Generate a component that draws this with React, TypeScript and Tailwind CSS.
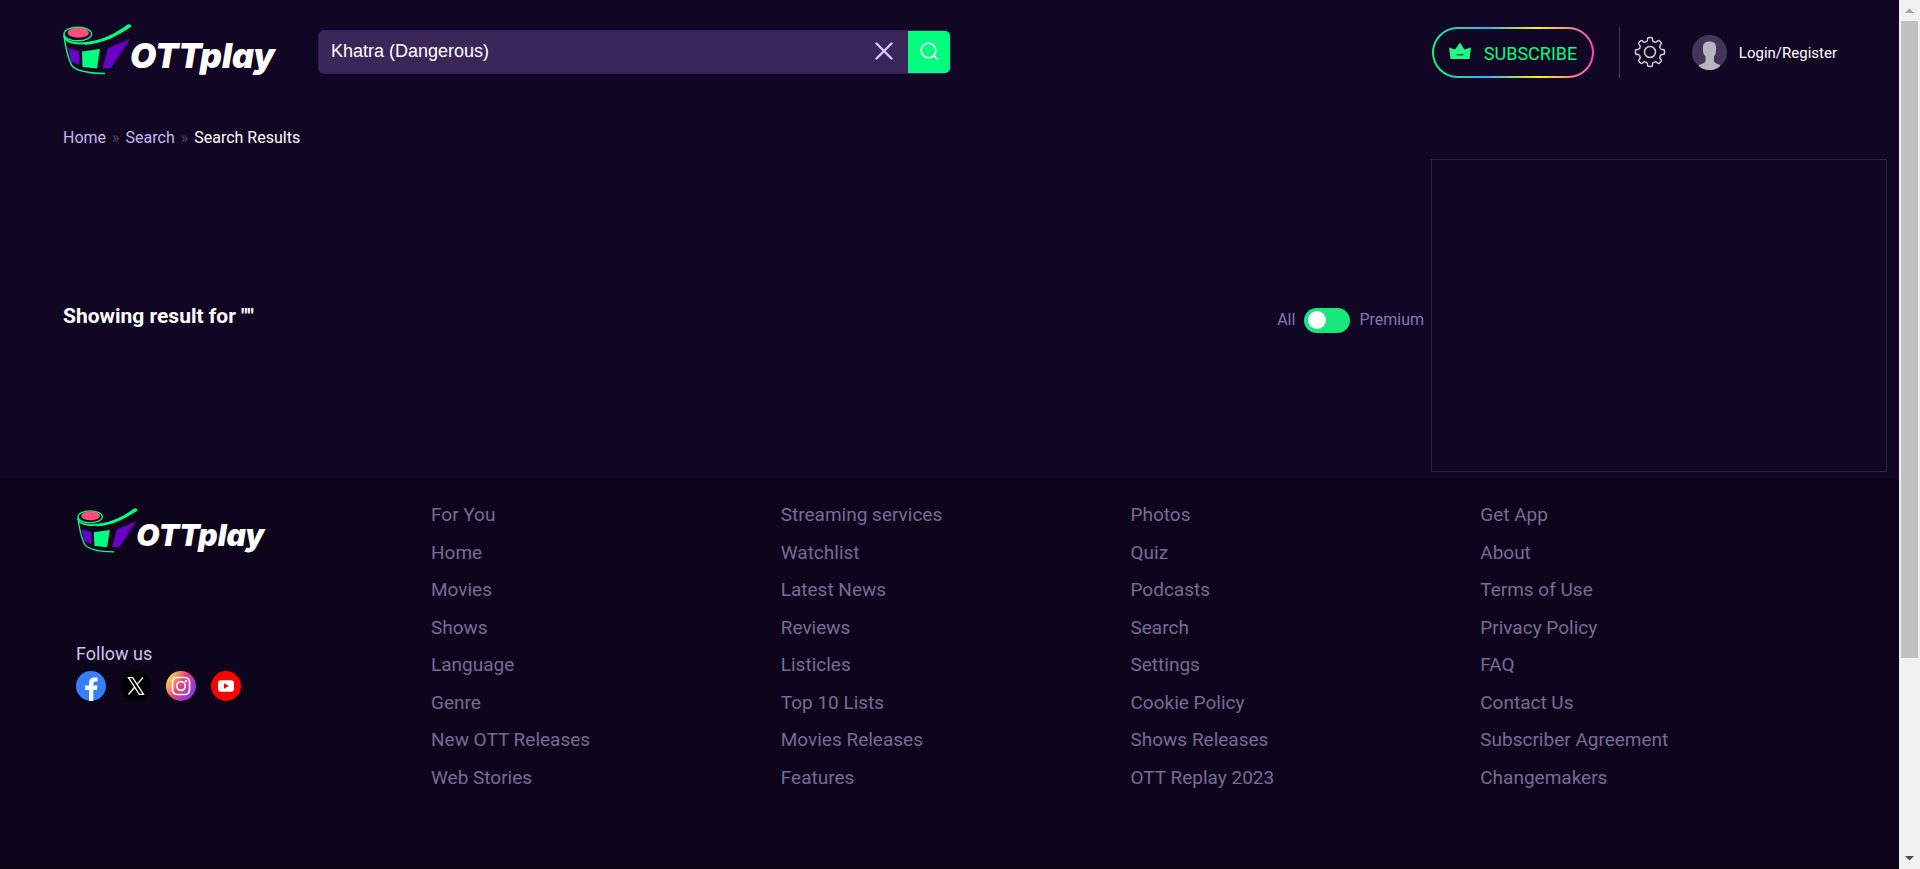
import React from "react";

const columns: string[][] = [
  ["For You", "Home", "Movies", "Shows", "Language", "Genre", "New OTT Releases", "Web Stories"],
  ["Streaming services", "Watchlist", "Latest News", "Reviews", "Listicles", "Top 10 Lists", "Movies Releases", "Features"],
  ["Photos", "Quiz", "Podcasts", "Search", "Settings", "Cookie Policy", "Shows Releases", "OTT Replay 2023"],
  ["Get App", "About", "Terms of Use", "Privacy Policy", "FAQ", "Contact Us", "Subscriber Agreement", "Changemakers"],
];

function Logo({ className }: { className: string }) {
  return (
    <svg viewBox="0 0 218 52" className={className} role="img" aria-label="OTTplay">
      <path d="M1 11C2 20 5 33 8 40C10 46 24 49.500 42 49.500" fill="none" stroke="#00ff7f" strokeWidth="1.500" />
      <path d="M5 24L16 27L16.500 41L8 37.500Z" fill="#6a00c4" />
      <path d="M19 27.500L37 25L34 44.500L19.500 43Z" fill="#00ff7f" />
      <path d="M45 24L67 15L48 44L39.500 44.500Z" fill="#6a00c4" />
      <ellipse cx="14.800" cy="10" rx="13.800" ry="6.800" fill="#110624" stroke="#00ff7f" strokeWidth="1.400" />
      <ellipse cx="15.300" cy="8.800" rx="10.700" ry="5" fill="#ff4d7d" />
      <path d="M1 12C3 21 22 21 38 16C50 12 58 7 66 1.500" fill="none" stroke="#00ff7f" strokeWidth="2" />
      <path d="M22 18.500C40 16.500 53 9 64.500 0.500Q68.500-.5 68 3C54 12 42 19 22 21Z" fill="#00ff7f" />
      <text x="67" y="43.500" fill="#fff" fontFamily="Inter, sans-serif" fontWeight="900" fontStyle="italic" fontSize="34">OTTplay</text>
    </svg>
  );
}

function Gear() {
  const teeth = [0, 45, 90, 135, 180, 225, 270, 315];
  return (
    <svg viewBox="-16 -16 32 32" className="size-8" fill="none" stroke="#d5d1da" strokeWidth="1.500" strokeLinejoin="round">
      {teeth.map((angle) => (
        <path
          key={angle}
          transform={`rotate(${angle})`}
          d="M-3.500-10.500Q-2.500-11-2.500-12V-13Q-2.500-14.500-1-14.500H1Q2.500-14.500 2.500-13V-12Q2.500-11 3.500-10.500Q4.300-10 4.950-9.900"
        />
      ))}
      <circle r="5.500" />
    </svg>
  );
}

function Facebook() {
  return (
    <svg viewBox="0 0 30 30" className="size-[30px]">
      <circle cx="15" cy="15" r="15" fill="#3580ff" />
      <path d="M13 30V19H9V14.500H13V12Q13 6.500 18.500 6.500H21.500V10.500H19.500Q17.300 10.500 17.300 12.700V14.500H21.500L20.800 19H17.300V30Z" fill="#fff" />
    </svg>
  );
}

function XLogo() {
  return (
    <svg viewBox="0 0 30 30" className="size-[30px]">
      <circle cx="15" cy="15" r="15" fill="#000" />
      <g fill="none" stroke="#fff" strokeWidth="1.300">
        <path d="M7.500 6.700H11.700L22.500 23.300H18.300Z" />
        <path d="M22 6.500L16 13.400M13.800 16L7.500 23.500" />
      </g>
    </svg>
  );
}

function Instagram() {
  return (
    <svg viewBox="0 0 30 30" className="size-[30px]">
      <defs>
        <linearGradient id="insta" x1="0" y1=".2" x2="1" y2=".8">
          <stop offset=".1" stopColor="#ffc85a" />
          <stop offset=".45" stopColor="#f0407b" />
          <stop offset=".75" stopColor="#a93bc4" />
          <stop offset="1" stopColor="#5d45df" />
        </linearGradient>
      </defs>
      <circle cx="15" cy="15" r="15" fill="url(#insta)" />
      <g fill="none" stroke="#fff" strokeWidth="1.700">
        <rect x="6.500" y="6.500" width="17" height="17" rx="4.500" />
        <circle cx="15" cy="15" r="4.300" />
      </g>
      <circle cx="20" cy="10" r="1.200" fill="#fff" />
    </svg>
  );
}

function YouTube() {
  return (
    <svg viewBox="0 0 30 30" className="size-[30px]">
      <circle cx="15" cy="15" r="15" fill="#f00" />
      <rect x="7" y="9.300" width="16" height="11.500" rx="3" fill="#fff" />
      <path d="M13 12.300L17.800 15L13 17.800Z" fill="#f00" />
    </svg>
  );
}

const socials = [
  { name: "Facebook", Icon: Facebook },
  { name: "X", Icon: XLogo },
  { name: "Instagram", Icon: Instagram },
  { name: "YouTube", Icon: YouTube },
];

function Header() {
  return (
    <header className="flex h-[106px] items-start pl-[63px] pr-[62px]">
      <a href="#home" className="mt-6">
        <Logo className="h-[52px] w-[218px] overflow-visible" />
      </a>
      <form className="ml-[37px] mt-[30px] flex h-11 w-[633px] overflow-hidden rounded-md border border-[#3b1566] bg-[#3b265a]" onSubmit={(e) => e.preventDefault()}>
        <input
          aria-label="Search"
          defaultValue="Khatra (Dangerous)"
          className="min-w-0 flex-1 bg-transparent px-3 pb-[2px] font-['Liberation_Sans',sans-serif] text-[18px] text-white outline-none"
        />
        <button type="button" aria-label="Clear search" className="flex w-12 items-center justify-center pb-[2px]">
          <svg viewBox="0 0 18 18" className="size-[18px]" stroke="#d9c8f5" strokeWidth="2.400" strokeLinecap="round">
            <path d="M1.500 1.500L16.500 16.500M16.500 1.500L1.500 16.500" />
          </svg>
        </button>
        <button type="submit" aria-label="Submit search" className="flex w-[42px] items-center justify-center bg-[#00ff7f] pb-[2px]">
          <svg viewBox="0 0 18 18" className="size-[18px]" fill="none" stroke="#fff" strokeWidth="1.600" strokeLinecap="round">
            <circle cx="8.500" cy="8.500" r="7.300" />
            <path d="M13.800 13.800L17 17" />
          </svg>
        </button>
      </form>
      <div className="ml-auto mt-[27px] flex h-[51px] items-center">
        <button className="h-[51px] w-[162px] rounded-full bg-[linear-gradient(90deg,#1ef07f_0%,#29b6f6_33%,#f5f518_66%,#ff3fd0_100%)] p-[2px]">
          <span className="flex h-full items-center gap-[13px] rounded-full bg-[#110624] pl-[15px] pt-[2px] text-[18px] text-[#00ff7f]">
            <svg viewBox="0 0 22 18" className="mb-[6px] h-[18px] w-[22px]">
              <path d="M0 5.500L6 7.500L11 .5L15.500 7.500L22 5.500L20.500 17H1.500Z" fill="#22f586" />
              <path d="M7.500 12.700H14.500" stroke="#0b6b3a" strokeWidth="1.500" />
            </svg>
            SUBSCRIBE
          </span>
        </button>
        <div className="ml-[25px] h-full w-px bg-[#43345a]" />
        <button aria-label="Settings" className="ml-[14px] pb-[2px]">
          <Gear />
        </button>
        <a href="#login" className="ml-[26px] flex items-center gap-[12px] text-[15px] text-white">
          <svg viewBox="0 0 35 35" className="size-[35px]">
            <defs>
              <clipPath id="avatar">
                <circle cx="17.500" cy="17.500" r="17.500" />
              </clipPath>
            </defs>
            <g clipPath="url(#avatar)">
              <rect width="35" height="35" fill="#433459" />
              <path d="M11 12Q11 6.500 17.500 6.500T24 12V16Q24 19.500 22 21.500V26Q22 28 28 30V35H7V30Q13.500 28 13.500 26V21.500Q11 19.500 11 16Z" fill="#b9b5bf" />
            </g>
          </svg>
          <span className="pt-[2px]">Login/Register</span>
        </a>
      </div>
    </header>
  );
}

function Results() {
  return (
    <main>
      <nav aria-label="Breadcrumb" className="flex h-[53px] items-end gap-[6px] pb-[9px] pl-[63px] text-[16px] leading-6">
        <a href="#home" className="text-[#c9b6f0]">Home</a>
        <span className="text-[#5b4a75]">»</span>
        <a href="#search" className="text-[#c9b6f0]">Search</a>
        <span className="text-[#5b4a75]">»</span>
        <span className="text-white">Search Results</span>
      </nav>
      <div className="flex pb-[6px] pl-[63px] pr-3">
        <div className="flex flex-1 items-start justify-between pr-[7px] pt-[143px]">
          <h1 className="text-[21px] font-bold leading-7 text-white">Showing result for ""</h1>
          <div className="mt-1 flex items-center gap-[9px] text-[16px] leading-7 text-[#8b75b5]">
            <span>All</span>
            <label className="flex">
              <input type="checkbox" role="switch" aria-label="Premium only" className="peer sr-only" />
              <span className="flex h-[25px] w-[46px] items-center rounded-full bg-[#16e87c] px-1 peer-checked:justify-end">
                <span className="size-[18px] rounded-full bg-white" />
              </span>
            </label>
            <span>Premium</span>
          </div>
        </div>
        <aside className="h-[313px] w-[456px] border border-[#30253f]" />
      </div>
    </main>
  );
}

function Footer() {
  return (
    <footer className="flex flex-1 flex-col bg-[#0d051b]">
      <div className="flex flex-1 pl-[76px] pr-[69px]">
        <div className="w-[355px] pt-[30px]">
          <a href="#home" className="block w-[195px]">
            <Logo className="h-[46px] w-[195px] overflow-visible" />
          </a>
          <p className="mt-[86px] text-[18px] leading-7 text-[#d3c3f2]">Follow us</p>
          <ul className="mt-[3px] flex gap-[15px]">
            {socials.map(({ name, Icon }) => (
              <li key={name}>
                <a href={`#${name}`} aria-label={name}>
                  <Icon />
                </a>
              </li>
            ))}
          </ul>
        </div>
        <div className="grid flex-1 grid-cols-4 pt-[23px]">
          {columns.map((links) => (
            <ul key={links[0]} className="flex h-[291px] flex-col justify-between">
              {links.map((link) => (
                <li key={link} className="text-[19px] leading-7 text-[#7a6a96]">
                  <a href="#link">{link}</a>
                </li>
              ))}
            </ul>
          ))}
        </div>
      </div>
      <div className="h-px bg-[#090312]" />
    </footer>
  );
}

function Scrollbar() {
  return (
    <div aria-hidden="true" className="flex w-[21px] flex-col items-center bg-[#f1f1f1]">
      <svg viewBox="0 0 21 21" className="h-[21px] w-[21px]">
        <path d="M6 13L10.500 8.500L15 13Z" fill="#a3a3a3" />
      </svg>
      <div className="flex w-[17px] flex-1 flex-col">
        <div className="h-[77%] bg-[#c1c1c1]" />
      </div>
      <svg viewBox="0 0 21 21" className="h-[21px] w-[21px]">
        <path d="M6 8L10.500 12.500L15 8Z" fill="#505050" />
      </svg>
    </div>
  );
}

export default function App() {
  return (
    <div className="flex min-h-screen bg-[#110624] font-[Roboto,'Noto_Sans',sans-serif]">
      <div className="flex min-w-0 flex-1 flex-col">
        <Header />
        <Results />
        <Footer />
      </div>
      <Scrollbar />
    </div>
  );
}
